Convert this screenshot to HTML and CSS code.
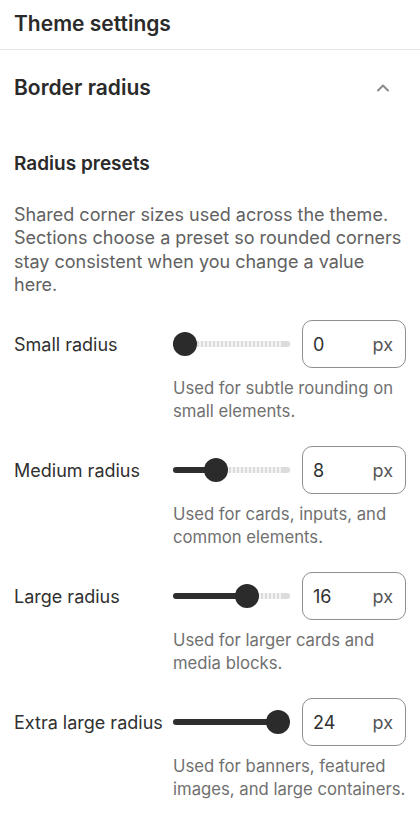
FILE: index.html
```html
<!DOCTYPE html>
<html lang="en">
<head>
    <meta charset="UTF-8">
    <meta name="viewport" content="width=device-width, initial-scale=1.0">
    <title>Theme settings</title>
    <link rel="stylesheet" href="styles.css">
</head>
<body>
    <div class="panel">
        <div class="panel-header">Theme settings</div>

        <div class="section">
            <div class="section-head">
                <span>Border radius</span>
                <svg class="chevron" width="16" height="16" viewBox="0 0 16 16">
                    <polyline points="3,10.5 8,5.5 13,10.5" fill="none" stroke="#8a8a8a" stroke-width="2" stroke-linecap="round" stroke-linejoin="round"/>
                </svg>
            </div>

            <div class="section-body">
                <h3 class="group-title">Radius presets</h3>
                <p class="group-desc">Shared corner sizes used across the theme. Sections choose a preset so rounded corners stay consistent when you change a value here.</p>

                <!-- 小 -->
                <div class="setting">
                    <label class="setting-label">Small radius</label>
                    <div class="slider">
                        <div class="track"></div>
                        <div class="fill" style="width: 12px"></div>
                        <div class="thumb" style="left: 0px"></div>
                    </div>
                    <div class="num-input"><span>0</span><span class="unit">px</span></div>
                    <p class="setting-help">Used for subtle rounding on small elements.</p>
                </div>

                <!-- 中 -->
                <div class="setting">
                    <label class="setting-label">Medium radius</label>
                    <div class="slider">
                        <div class="track"></div>
                        <div class="fill" style="width: 43px"></div>
                        <div class="thumb" style="left: 31px"></div>
                    </div>
                    <div class="num-input"><span>8</span><span class="unit">px</span></div>
                    <p class="setting-help">Used for cards, inputs, and common elements.</p>
                </div>

                <!-- 大 -->
                <div class="setting">
                    <label class="setting-label">Large radius</label>
                    <div class="slider">
                        <div class="track"></div>
                        <div class="fill" style="width: 74px"></div>
                        <div class="thumb" style="left: 62px"></div>
                    </div>
                    <div class="num-input"><span>16</span><span class="unit">px</span></div>
                    <p class="setting-help">Used for larger cards and media blocks.</p>
                </div>

                <!-- 特大 -->
                <div class="setting">
                    <label class="setting-label">Extra large radius</label>
                    <div class="slider">
                        <div class="track"></div>
                        <div class="fill" style="width: 105px"></div>
                        <div class="thumb" style="left: 93px"></div>
                    </div>
                    <div class="num-input"><span>24</span><span class="unit">px</span></div>
                    <p class="setting-help">Used for banners, featured images, and large containers.</p>
                </div>
            </div>
        </div>
    </div>
</body>
</html>
```

FILE: styles.css
```css
body {
    margin: 0;
    padding: 0;
    background-color: #fff;
    color: #303030;
    font-family: 'Inter', 'Liberation Sans', sans-serif;
}

.panel {
    width: 420px;
}

/* ヘッダー */
.panel-header {
    font-size: 21px;
    font-weight: 600;
    line-height: 28px;
    padding: 10px 14px 11px;
    border-bottom: 1px solid #e6e6e6;
    color: #2a2a2a;
}

.section-head {
    display: flex;
    justify-content: space-between;
    align-items: center;
    padding: 24px 29px 0 14px;
    font-size: 21px;
    font-weight: 600;
    line-height: 28px;
    color: #2a2a2a;
}

.chevron {
    display: block;
}

.section-body {
    padding: 49px 14px 0;
}

.group-title {
    margin: 0;
    font-size: 19px;
    font-weight: 600;
    line-height: 26px;
    color: #2a2a2a;
}

.group-desc {
    margin: 26px 0 24px;
    font-size: 18px;
    line-height: 23.3px;
    color: #616161;
}

/* 各設定行 */
.setting {
    display: grid;
    grid-template-columns: 147px 117px 104px;
    column-gap: 12px;
    align-items: center;
    margin-bottom: 23px;
}

.setting-label {
    font-size: 18px;
    color: #303030;
    white-space: nowrap;
}

.slider {
    position: relative;
    height: 24px;
}

.track {
    position: absolute;
    left: 0;
    right: 0;
    top: 9px;
    height: 6px;
    border-radius: 3px;
    background: repeating-linear-gradient(90deg, #dcdcdc 0 2px, #f3f3f3 2px 4px);
}

.track::after {
    content: "";
    position: absolute;
    right: 0;
    top: 0;
    width: 9px;
    height: 6px;
    border-radius: 3px;
    background: #dcdcdc;
}

.fill {
    position: absolute;
    left: 0;
    top: 9px;
    height: 6px;
    border-radius: 3px;
    background: #2e2e2e;
}

.thumb {
    position: absolute;
    top: 0;
    width: 24px;
    height: 24px;
    border-radius: 50%;
    background: #2b2b2b;
}

.num-input {
    display: flex;
    justify-content: space-between;
    align-items: center;
    box-sizing: border-box;
    height: 48px;
    padding: 0 12px 0 10px;
    border: 1px solid #8f8f8f;
    border-radius: 10px;
    font-size: 18px;
    color: #303030;
}

.num-input .unit {
    color: #555;
}

.setting-help {
    grid-column: 2 / 4;
    margin: 9px 0 0;
    font-size: 16.7px;
    line-height: 23px;
    color: #707070;
}
```
